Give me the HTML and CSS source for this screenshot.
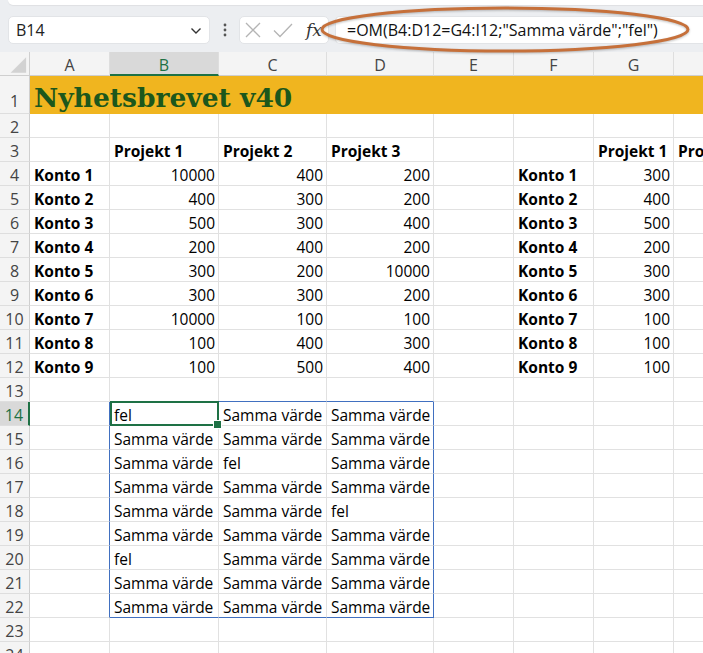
FILE: index.html
```html
<!DOCTYPE html>
<html lang="sv">
<head>
<meta charset="utf-8">
<title>Nyhetsbrevet v40</title>
<link rel="stylesheet" href="styles.css">
</head>
<body>
<div class="ribbon"></div>
<div class="fbar">
  <div class="namebox"><span>B14</span>
    <svg class="chev" width="12" height="8" viewBox="0 0 12 8"><path d="M1.5 1.5 L6 6 L10.5 1.5" fill="none" stroke="#333" stroke-width="1.4"/></svg>
  </div>
  <div class="dots"><svg width="4" height="14" viewBox="0 0 4 14"><circle cx="2" cy="2" r="1.4" fill="#555"/><circle cx="2" cy="7" r="1.4" fill="#555"/><circle cx="2" cy="12" r="1.4" fill="#555"/></svg></div>
  <div class="fxbox">
    <svg width="16" height="16" viewBox="0 0 16 16"><path d="M1 1 L15 15 M15 1 L1 15" stroke="#b4b4b4" stroke-width="1.3" fill="none"/></svg>
    <svg width="20" height="16" viewBox="0 0 20 16"><path d="M1 8.5 L7 14.5 L19 2" stroke="#b4b4b4" stroke-width="1.3" fill="none"/></svg>
    <span class="fx">fx</span>
  </div>
  <div class="formula">=OM(B4:D12=G4:I12;"Samma värde";"fel")</div>
</div>
<svg class="ring" width="703" height="60" viewBox="0 0 703 60"><ellipse cx="505" cy="29.5" rx="183" ry="21.5" fill="none" stroke="#c6703a" stroke-width="3"/></svg>

<div class="sheet">
  <div class="corner"><svg width="30" height="24" viewBox="0 0 30 24"><polygon points="27,5 27,21 11,21" fill="#d2d2d2"/></svg></div>
  <div class="ch">A</div><div class="ch sel">B</div><div class="ch">C</div><div class="ch">D</div><div class="ch">E</div><div class="ch">F</div><div class="ch">G</div><div class="ch">H</div>

  <div class="rh tall">1</div><div class="title">Nyhetsbrevet v40</div>

  <div class="rh">2</div><div class="c"></div><div class="c"></div><div class="c"></div><div class="c"></div><div class="c"></div><div class="c"></div><div class="c"></div><div class="c"></div>

  <div class="rh">3</div><div class="c"></div><div class="c b">Projekt 1</div><div class="c b">Projekt 2</div><div class="c b">Projekt 3</div><div class="c"></div><div class="c"></div><div class="c b">Projekt 1</div><div class="c b">Projekt 2</div>

  <div class="rh">4</div><div class="c b">Konto 1</div><div class="c n">10000</div><div class="c n">400</div><div class="c n">200</div><div class="c"></div><div class="c b">Konto 1</div><div class="c n">300</div><div class="c"></div>
  <div class="rh">5</div><div class="c b">Konto 2</div><div class="c n">400</div><div class="c n">300</div><div class="c n">200</div><div class="c"></div><div class="c b">Konto 2</div><div class="c n">400</div><div class="c"></div>
  <div class="rh">6</div><div class="c b">Konto 3</div><div class="c n">500</div><div class="c n">300</div><div class="c n">400</div><div class="c"></div><div class="c b">Konto 3</div><div class="c n">500</div><div class="c"></div>
  <div class="rh">7</div><div class="c b">Konto 4</div><div class="c n">200</div><div class="c n">400</div><div class="c n">200</div><div class="c"></div><div class="c b">Konto 4</div><div class="c n">200</div><div class="c"></div>
  <div class="rh">8</div><div class="c b">Konto 5</div><div class="c n">300</div><div class="c n">200</div><div class="c n">10000</div><div class="c"></div><div class="c b">Konto 5</div><div class="c n">300</div><div class="c"></div>
  <div class="rh">9</div><div class="c b">Konto 6</div><div class="c n">300</div><div class="c n">300</div><div class="c n">200</div><div class="c"></div><div class="c b">Konto 6</div><div class="c n">300</div><div class="c"></div>
  <div class="rh">10</div><div class="c b">Konto 7</div><div class="c n">10000</div><div class="c n">100</div><div class="c n">100</div><div class="c"></div><div class="c b">Konto 7</div><div class="c n">100</div><div class="c"></div>
  <div class="rh">11</div><div class="c b">Konto 8</div><div class="c n">100</div><div class="c n">400</div><div class="c n">300</div><div class="c"></div><div class="c b">Konto 8</div><div class="c n">100</div><div class="c"></div>
  <div class="rh">12</div><div class="c b">Konto 9</div><div class="c n">100</div><div class="c n">500</div><div class="c n">400</div><div class="c"></div><div class="c b">Konto 9</div><div class="c n">100</div><div class="c"></div>

  <div class="rh">13</div><div class="c"></div><div class="c st"></div><div class="c st"></div><div class="c st"></div><div class="c"></div><div class="c"></div><div class="c"></div><div class="c"></div>

  <div class="rh sel">14</div><div class="c sl"></div><div class="c act">fel</div><div class="c">Samma värde</div><div class="c sr">Samma värde</div><div class="c"></div><div class="c"></div><div class="c"></div><div class="c"></div>
  <div class="rh">15</div><div class="c sl"></div><div class="c">Samma värde</div><div class="c">Samma värde</div><div class="c sr">Samma värde</div><div class="c"></div><div class="c"></div><div class="c"></div><div class="c"></div>
  <div class="rh">16</div><div class="c sl"></div><div class="c">Samma värde</div><div class="c">fel</div><div class="c sr">Samma värde</div><div class="c"></div><div class="c"></div><div class="c"></div><div class="c"></div>
  <div class="rh">17</div><div class="c sl"></div><div class="c">Samma värde</div><div class="c">Samma värde</div><div class="c sr">Samma värde</div><div class="c"></div><div class="c"></div><div class="c"></div><div class="c"></div>
  <div class="rh">18</div><div class="c sl"></div><div class="c">Samma värde</div><div class="c">Samma värde</div><div class="c sr">fel</div><div class="c"></div><div class="c"></div><div class="c"></div><div class="c"></div>
  <div class="rh">19</div><div class="c sl"></div><div class="c">Samma värde</div><div class="c">Samma värde</div><div class="c sr">Samma värde</div><div class="c"></div><div class="c"></div><div class="c"></div><div class="c"></div>
  <div class="rh">20</div><div class="c sl"></div><div class="c">fel</div><div class="c">Samma värde</div><div class="c sr">Samma värde</div><div class="c"></div><div class="c"></div><div class="c"></div><div class="c"></div>
  <div class="rh">21</div><div class="c sl"></div><div class="c">Samma värde</div><div class="c">Samma värde</div><div class="c sr">Samma värde</div><div class="c"></div><div class="c"></div><div class="c"></div><div class="c"></div>
  <div class="rh">22</div><div class="c sl"></div><div class="c sb">Samma värde</div><div class="c sb">Samma värde</div><div class="c sr sb">Samma värde</div><div class="c"></div><div class="c"></div><div class="c"></div><div class="c"></div>

  <div class="rh">23</div><div class="c"></div><div class="c"></div><div class="c"></div><div class="c"></div><div class="c"></div><div class="c"></div><div class="c"></div><div class="c"></div>
  <div class="rh">24</div><div class="c"></div><div class="c"></div><div class="c"></div><div class="c"></div><div class="c"></div><div class="c"></div><div class="c"></div><div class="c"></div>
</div>
</body>
</html>
```
FILE: styles.css
```css
* { box-sizing: border-box; }
html, body { margin: 0; padding: 0; }
body {
  width: 703px;
  height: 653px;
  overflow: hidden;
  position: relative;
  background: #eceef1;
  font-family: "Open Sans", "Noto Sans", sans-serif;
  color: #000;
}
.ribbon {
  height: 5px;
  margin-left: 8px;
  background: #fff;
  border-bottom-left-radius: 6px;
  box-shadow: 0 1px 1px rgba(0,0,0,0.06);
}
.fbar {
  display: flex;
  align-items: center;
  height: 28px;
  margin: 11px 0 8px 8px;
}
.namebox {
  width: 202px;
  height: 28px;
  background: #fff;
  border: 1px solid #e2e4e7;
  border-radius: 5px;
  display: flex;
  align-items: center;
  justify-content: space-between;
  padding: 0 7px 0 7px;
  font-size: 16px;
  color: #222;
}
.chev { margin-top: 2px; }
.dots {
  width: 29px;
  display: flex;
  justify-content: center;
  align-items: center;
}
.fxbox {
  width: 90px;
  height: 28px;
  background: #fff;
  border: 1px solid #e2e4e7;
  border-radius: 5px;
  display: flex;
  align-items: center;
  padding: 0 6px 0 5px;
  gap: 12px;
}
.fx {
  font-family: "DejaVu Serif", serif;
  font-style: italic;
  font-size: 17px;
  color: #333;
  margin-left: 1px;
}
.formula {
  flex: 1;
  margin-left: 6px;
  height: 28px;
  background: #fff;
  border: 1px solid #e2e4e7;
  border-right: none;
  border-radius: 5px 0 0 5px;
  padding-left: 11px;
  font-size: 16px;
  line-height: 26px;
  white-space: nowrap;
  color: #111;
}
.ring {
  position: absolute;
  left: 0;
  top: 0;
  pointer-events: none;
  filter: drop-shadow(0 1px 1px rgba(0,0,0,0.25));
}
.sheet {
  display: grid;
  grid-template-columns: 30px 80px 109px 108px 107px 80px 80px 80px 80px;
  grid-template-rows: 24px 38px repeat(23, 24px);
  width: 754px;
  background: #fff;
}
.corner {
  background: #f4f4f4;
  border-right: 1px solid #cfcfcf;
  border-bottom: 1px solid #cfcfcf;
  display: flex;
}
.ch {
  background: #f4f4f4;
  border-right: 1px solid #dedede;
  border-bottom: 1px solid #cfcfcf;
  text-align: center;
  font-size: 16px;
  padding-top: 3px;
  line-height: 21px;
  color: #444;
}
.ch.sel {
  background: #d9d9d9;
  border-bottom: 2px solid #1e7145;
  color: #1e7145;
}
.rh {
  background: #f4f4f4;
  border-right: 1px solid #cfcfcf;
  border-bottom: 1px solid #dedede;
  text-align: center;
  font-size: 16px;
  padding-top: 3px;
  line-height: 21px;
  color: #444;
}
.rh.tall {
  display: flex;
  align-items: flex-end;
  justify-content: center;
  padding-bottom: 1px;
}
.rh.sel {
  background: #d9d9d9;
  border-right: 2px solid #1e7145;
  color: #1e7145;
}
.title {
  grid-column: 2 / -1;
  background: #f0b51f;
  color: #1c571c;
  font-family: "DejaVu Serif", serif;
  font-weight: 700;
  font-size: 26.5px;
  line-height: 30px;
  padding: 0 0 1px 4px;
  display: flex;
  align-items: flex-end;
  white-space: nowrap;
}
.c {
  position: relative;
  border-right: 1px solid #e1e1e1;
  border-bottom: 1px solid #e1e1e1;
  padding: 3px 4px 0;
  font-size: 15.5px;
  line-height: 21px;
  white-space: nowrap;
  overflow: visible;
}
.c.b { font-weight: 700; }
.c.n { text-align: right; padding-right: 3px; }
.c.st { border-bottom-color: #4170c0; }
.c.sb { border-bottom-color: #4170c0; }
.c.sl { border-right-color: #4170c0; }
.c.sr { border-right-color: #4170c0; }
.c.act::after {
  content: "";
  position: absolute;
  left: 0;
  top: -1px;
  right: -1px;
  bottom: -1px;
  border: 2px solid #1e7145;
}
.c.act::before {
  content: "";
  position: absolute;
  right: -4px;
  bottom: -4px;
  width: 7px;
  height: 7px;
  background: #1e7145;
  border: 1px solid #fff;
  z-index: 2;
}
```
